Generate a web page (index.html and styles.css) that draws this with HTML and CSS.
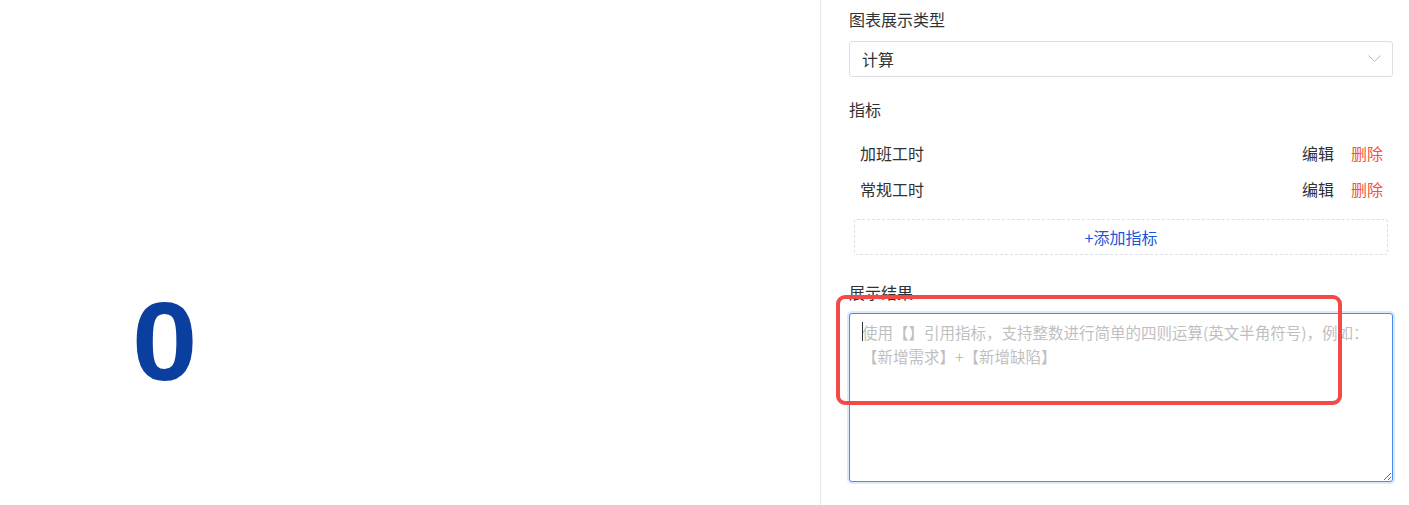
FILE: index.html
```html
<!DOCTYPE html>
<html lang="zh">
<head>
<meta charset="utf-8">
<link rel="stylesheet" href="styles.css">
</head>
<body>
<div class="page">
  <div class="preview">
    <div class="big-num">0</div>
  </div>
  <div class="panel">
    <div class="form-item">
      <div class="label">图表展示类型</div>
      <div class="select">
        <span class="select-value">计算</span>
        <svg class="chevron" width="13" height="8" viewBox="0 0 13 8"><path d="M0.5 0.5 L6.5 6.5 L12.5 0.5" fill="none" stroke="#b8bcc4" stroke-width="1"/></svg>
      </div>
    </div>
    <div class="form-item metrics">
      <div class="label">指标</div>
      <div class="metric-list">
        <div class="metric-row">
          <span class="metric-name">加班工时</span>
          <span class="actions"><span class="edit">编辑</span><span class="delete">删除</span></span>
        </div>
        <div class="metric-row">
          <span class="metric-name">常规工时</span>
          <span class="actions"><span class="edit">编辑</span><span class="delete">删除</span></span>
        </div>
      </div>
      <div class="add-btn">+添加指标</div>
    </div>
    <div class="form-item result">
      <div class="label">展示结果</div>
      <div class="textarea-wrap">
        <textarea class="textarea" placeholder="使用【】引用指标，支持整数进行简单的四则运算(英文半角符号)，例如：【新增需求】+【新增缺陷】"></textarea>
        <span class="caret"></span>
      </div>
    </div>
    <div class="highlight"></div>
  </div>
</div>
</body>
</html>
```
FILE: styles.css
```css
* { box-sizing: border-box; }
html, body { margin: 0; padding: 0; background: #fff; }
body {
  font-family: "Noto Sans CJK SC", "Noto Sans", sans-serif;
  color: #303133;
  font-size: 16px;
}
.page {
  display: flex;
  width: 1409px;
  height: 505px;
  overflow: hidden;
}
.preview {
  width: 821px;
  flex: none;
  border-right: 1px solid #e8e8e8;
  padding: 287px 0 0 132px;
}
.big-num {
  font-family: "Liberation Sans", Arial, sans-serif;
  font-weight: bold;
  font-size: 111px;
  line-height: 1;
  color: #0b3f9f;
  transform: scaleX(1.06);
  transform-origin: left top;
}
.panel {
  position: relative;
  flex: 1;
  padding: 9px 16px 0 28px;
}
.label {
  height: 22px;
  line-height: 20px;
  margin-bottom: 10px;
}
.form-item { margin-bottom: 22px; }
.form-item.metrics { margin-bottom: 27px; }
.form-item.result { margin-bottom: 0; }
.select {
  height: 36px;
  border: 1px solid #dcdfe6;
  border-radius: 3px;
  display: flex;
  align-items: center;
  justify-content: space-between;
  padding: 0 11px 0 12px;
}
.chevron { display: block; }
.metric-list { margin-top: 14px; }
.metric-row {
  height: 36px;
  display: flex;
  align-items: center;
  justify-content: space-between;
  padding: 0 10px 0 11px;
}
.actions { display: flex; gap: 17px; }
.delete { color: #f5533d; }
.add-btn {
  margin: 12px 5px 0 5px;
  height: 36px;
  border: 1px dashed #dcdfe6;
  border-radius: 3px;
  display: flex;
  align-items: center;
  justify-content: center;
  color: #1a56db;
}
.result .label { margin-bottom: 9px; }
.textarea-wrap { position: relative; }
.textarea {
  display: block;
  width: 100%;
  height: 169px;
  border: 1px solid #4a8af4;
  border-radius: 3px;
  box-shadow: 0 0 0 2px rgba(74, 138, 244, 0.2);
  padding: 6px 12px;
  font-family: "Noto Sans CJK SC", "Noto Sans", sans-serif;
  font-size: 15.5px;
  line-height: 24px;
  color: #303133;
  outline: none;
  resize: vertical;
}
.textarea::placeholder { color: #bfbfbf; }
.caret {
  position: absolute;
  left: 13px;
  top: 9px;
  width: 1px;
  height: 19px;
  background: #303133;
}
.highlight {
  position: absolute;
  left: 15px;
  top: 295px;
  width: 506px;
  height: 110px;
  border: 4px solid #f24a46;
  border-radius: 9px;
}
```
